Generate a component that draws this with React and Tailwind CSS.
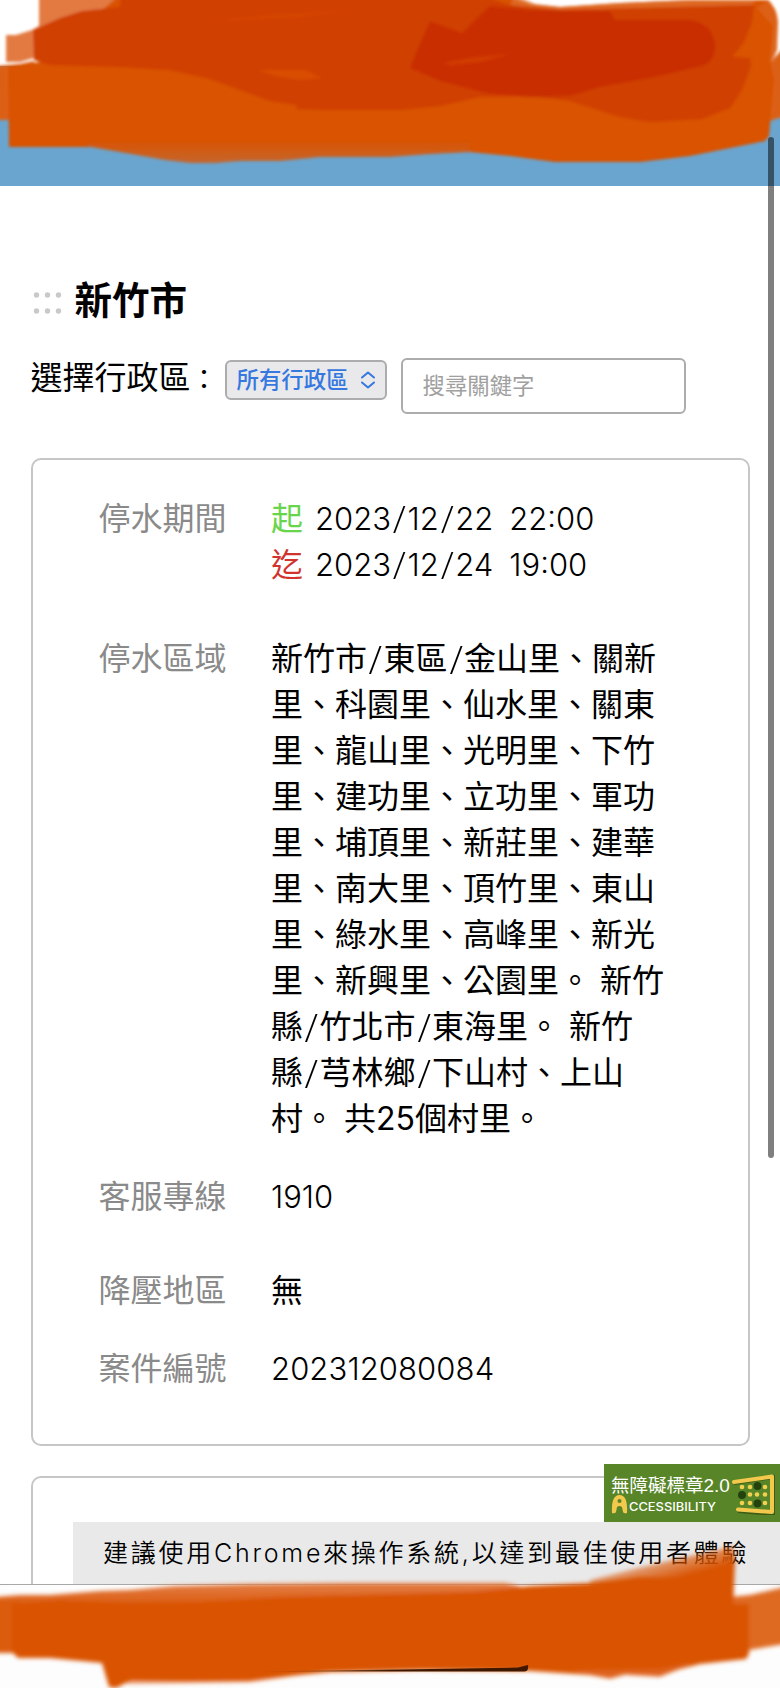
import React from 'react';

const areaLines = [
    '新竹市/東區/金山里、關新',
    '里、科園里、仙水里、關東',
    '里、龍山里、光明里、下竹',
    '里、建功里、立功里、軍功',
    '里、埔頂里、新莊里、建華',
    '里、南大里、頂竹里、東山',
    '里、綠水里、高峰里、新光',
    '里、新興里、公園里。 新竹',
    '縣/竹北市/東海里。 新竹',
    '縣/芎林鄉/下山村、上山',
    '村。 共25個村里。',
];

const Row = ({ label, className = '', children }) => (
    <div className={`flex ${className}`}>
        <div className="w-[172.5px] shrink-0 text-[#8a8a8a]">{label}</div>
        <div className="whitespace-pre">{children}</div>
    </div>
);

// Slashes sit in a wider cell than the font gives them
const Slashed = ({ text }) =>
    text.split('/').map((part, index) => (
        <React.Fragment key={index}>
            {index > 0 && <span className="inline-block w-[16.5px] origin-center scale-x-140 text-center font-extralight">/</span>}
            {part}
        </React.Fragment>
    ));

const Period = ({ mark, color, date, time }) => (
    <div className="flex">
        <span className={`w-[44px] ${color}`}>{mark}</span>
        <span className="mr-[16px] text-[31px] font-[360]"><Slashed text={date} /></span>
        <span className="text-[31px] font-[360]">{time}</span>
    </div>
);

const TopScribble = () => (
    <svg className="absolute left-0 top-0" width="780" height="186" viewBox="0 0 780 186">
        <defs>
            <filter id="soft" x="-5%" y="-10%" width="110%" height="120%">
                <feGaussianBlur stdDeviation="1.5" />
            </filter>
            <linearGradient id="fade" x1="0" y1="140" x2="0" y2="163" gradientUnits="userSpaceOnUse">
                <stop offset="0" stopColor="#d95200" />
                <stop offset="1" stopColor="#c4662e" />
            </linearGradient>
        </defs>
        <path fill="#fff" d="M-5 -5H785V66H-5Z" />
        <g filter="url(#soft)">
            <path fill="#db6014" d="M-5 66L20 64L34 61V120H-5ZM755 0H768Q777 8 778 22L777 50L771 62L785 46V116L770 121L740 100Z" />
            <path fill="#e27a42" d="M39 -5H130V30L34 36V58L20 62H6V35H16L32 30L39 26Z" />
            <path fill="#d95200" d="M8 66L40 62L120 -5H505L530 4L560 7L620 3L690 0H768Q776 8 776 22L770 60L774 80L769 136L765 141L730 148L690 156L640 162L555 162L510 156L470 152L390 152L95 147H9Z" />
            <path fill="url(#fade)" d="M86 142V146L120 152L165 160L190 163H215L240 161H280L320 157L390 157L430 154L470 152V142Z" />
            <path fill="#e07030" opacity=".7" d="M515 -5L535 4L560 7L620 3L690 0H755L752 7L640 9L560 12L510 6Z" />
            <path fill="#e07030" opacity=".5" d="M757 8L768 0Q777 8 778 22L775 62L771 60L773 26Z" />
            <path fill="#d03f00" d="M33 30L60 18L82 11L120 7L121 -5H480L510 5L560 10L640 8L754 5L752 22L744 42L732 57L750 58L751 66L742 90L730 108L702 119L650 122L620 117L570 101L530 96L480 97L440 106L400 110H330L296 109L297 105L270 101L240 90L210 79L170 70L120 67L50 65L34 60Z" />
            <path fill="#d94e00" d="M258 70L305 70L322 78L300 80L275 76Z" />
            <path fill="#c92e00" d="M430 21L462 33L475 20L490 6L530 10L610 11L615 20H690Q714 24 715 46Q715 62 702 66L650 78L600 87L570 96L530 97L490 94L440 81L410 68L418 48Z" />
            <path fill="#d74802" opacity=".6" d="M444 63L470 58L510 54L480 62L450 65ZM210 22L260 15L350 10L300 18Z" />
        </g>
    </svg>
);

const BottomScribble = () => (
    <svg className="absolute bottom-0 left-0" width="780" height="158" viewBox="0 1530 780 158">
        <defs>
            <filter id="soft-bottom" x="-5%" y="-10%" width="110%" height="120%">
                <feGaussianBlur stdDeviation="2" />
            </filter>
            <linearGradient id="tip" x1="690" y1="1549" x2="697" y2="1574" gradientUnits="userSpaceOnUse">
                <stop offset="0" stopColor="#d95200" stopOpacity=".4" />
                <stop offset="1" stopColor="#d95200" />
            </linearGradient>
            <linearGradient id="band" x1="0" y1="1586" x2="0" y2="1606" gradientUnits="userSpaceOnUse">
                <stop offset="0" stopColor="#e27a40" />
                <stop offset="1" stopColor="#db5a0c" />
            </linearGradient>
            <linearGradient id="indicator" x1="255" y1="0" x2="528" y2="0" gradientUnits="userSpaceOnUse">
                <stop offset="0" stopColor="#401800" stopOpacity="0" />
                <stop offset=".5" stopColor="#401800" />
                <stop offset="1" stopColor="#401800" />
            </linearGradient>
        </defs>
        <g filter="url(#soft-bottom)">
            <path fill="url(#band)" d="M-5 1597L20 1595L50 1595L100 1591L130 1590L175 1586L250 1584L350 1583H505L520 1586V1620H-5Z" />
            <path fill="#de6a24" d="M720 1598L750 1595L785 1587V1644L749 1650H720Z" />
            <path fill="#db5c10" d="M-5 1600H20V1653H-5Z" />
            <path fill="url(#tip)" d="M590 1580L630 1570L680 1558L718 1550L733 1546L735 1560L733 1610H590Z" />
            <path fill="#d95200" d="M12 1604L60 1600L130 1603L200 1602L280 1597L400 1594L470 1592L530 1586L590 1583L640 1577L733 1580V1604L749 1604V1654L746 1659L700 1664L680 1669L660 1676L625 1674L610 1678L590 1675L530 1671L420 1670L330 1672L290 1676L250 1681L130 1681L116 1688L109 1687L102 1663L50 1658L18 1658L12 1652Z" />
            <path fill="#e06a28" opacity=".7" d="M122 1682L240 1680L300 1675L250 1682L130 1684ZM570 1670L660 1669L695 1662L660 1677L625 1675L610 1679L590 1675Z" />
        </g>
        <path fill="url(#indicator)" d="M255 1671.500L400 1669.500L518 1667.500L528 1665Q529 1671.500 524 1671.500Z" />
    </svg>
);

const AccessibilityBadge = () => (
    <div className="absolute left-[604px] top-[1464px] h-[58px] w-[176px] bg-[#588527] pl-[7px] pt-[10px] text-white">
        <div className="whitespace-nowrap text-[18.5px] leading-[23px]">
            無障礙標章<span className="font-['Liberation_Sans'] text-[19px]">2.0</span>
        </div>
        <div className="flex items-end">
            <svg width="17" height="19" viewBox="0 0 17 19" className="-mt-0.5">
                <path fill="#f2c94c" d="M1 18Q0 0 8.500 0Q17 0 16 18Q13 19 12 17L11 12Q8.500 10 6 12L5 17Q4 19 1 18Z" />
                <circle cx="8.500" cy="6" r="2" fill="#588527" />
            </svg>
            <svg width="90" height="15" viewBox="0 0 90 15">
                <text x="1" y="11.500" fontFamily="Inter, sans-serif" fontSize="11.500" fontWeight="500" fill="#fff" textLength="87" lengthAdjust="spacingAndGlyphs">CCESSIBILITY</text>
            </svg>
        </div>
        <svg className="absolute left-[126px] top-[9px]" width="48" height="42" viewBox="0 0 48 42">
            <path d="M4 10L43 4V41L8 38" fill="none" stroke="#3d5d16" strokeWidth="4" />
            <path d="M4 9L42 3.500V39L8 36.500" fill="none" stroke="#f2c94c" strokeWidth="4" strokeLinecap="round" strokeLinejoin="round" />
            <g fill="#f2d050">
                <circle cx="12" cy="14" r="2.300" />
                <circle cx="20" cy="14" r="2.300" />
                <circle cx="35" cy="14" r="2.300" />
                <circle cx="20" cy="21.500" r="2.300" />
                <circle cx="27" cy="21.500" r="2.300" />
                <circle cx="35" cy="21.500" r="2.300" />
                <circle cx="12" cy="30" r="2.300" />
                <circle cx="20" cy="30" r="2.300" />
                <circle cx="35" cy="30" r="2.300" />
            </g>
            <g fill="#23420e">
                <circle cx="27.500" cy="13" r="4" />
                <circle cx="12" cy="22" r="4" />
                <circle cx="27.500" cy="30.500" r="4" />
            </g>
        </svg>
    </div>
);

const App = () => (
    <div className="relative h-[1688px] w-[780px] overflow-hidden bg-white font-[Inter,'Noto_Sans_CJK_TC',sans-serif] text-black">
        <header className="h-[186px] bg-[#6aa5cf]" />

        <main className="px-[30.5px] text-[32px] leading-[46px]">
            <div className="flex items-center pt-[90px]">
                <svg width="44" height="24" viewBox="0 0 44 24" className="mt-1" fill="#c9c9c9">
                    <circle cx="5.500" cy="4" r="2.700" />
                    <circle cx="16.500" cy="4" r="2.700" />
                    <circle cx="27.500" cy="4" r="2.700" />
                    <circle cx="5.500" cy="20" r="2.700" />
                    <circle cx="16.500" cy="20" r="2.700" />
                    <circle cx="27.500" cy="20" r="2.700" />
                </svg>
                <h1 className="text-[37.500px] font-bold leading-[50px]">新竹市</h1>
            </div>

            <div className="mt-[32px] flex items-start">
                <div className="mt-[-3px] w-[194px] shrink-0 whitespace-nowrap">
                    選擇行政區<span className="text-[27px]">：</span>
                </div>
                <button className="mt-[2px] flex h-[40px] w-[162px] items-center justify-between rounded-[6px] border-2 border-[#acacae] bg-[#e9e9eb] pl-[10px] pr-[9px] text-[22.400px] font-medium leading-none text-[#3578e0]">
                    所有行政區
                    <svg width="16" height="18" viewBox="0 0 16 18" fill="none" stroke="#3578e0" strokeWidth="2" strokeLinecap="round" strokeLinejoin="round">
                        <path d="M2 6.500L8 1.500L14 6.500M2 11.500L8 16.500L14 11.500" />
                    </svg>
                </button>
                <input
                    className="ml-[14px] h-[56px] w-[285px] rounded-[6px] border-2 border-[#acacac] pl-[20px] pb-[2px] text-[22.400px] leading-none placeholder:text-[#a0a0a0]"
                    placeholder="搜尋關鍵字"
                />
            </div>

            <section className="mt-[44px] h-[988px] w-[719px] rounded-[10px] border-2 border-[#c6c6c6] pl-[66px] pt-[36px]">
                <Row label="停水期間">
                    <Period mark="起" color="text-[#68d54c]" date="2023/12/22" time="22:00" />
                    <Period mark="迄" color="text-[#d0342c]" date="2023/12/24" time="19:00" />
                </Row>
                <Row label="停水區域" className="mt-[48px]">
                    {areaLines.map((line) => (
                        <div key={line}><Slashed text={line} /></div>
                    ))}
                </Row>
                <Row label="客服專線" className="mt-[32px]">
                    <span className="text-[31px] font-[360]">1910</span>
                </Row>
                <Row label="降壓地區" className="mt-[48px]">無</Row>
                <Row label="案件編號" className="mt-[32px]">
                    <span className="text-[31px] font-[360] tracking-[0.1px]">202312080084</span>
                </Row>
            </section>

            <section className="mt-[30px] h-[200px] w-[719px] rounded-[10px] border-2 border-[#c6c6c6]" />
        </main>

        <div className="absolute left-[73px] top-[1522px] flex h-[62px] w-[707px] items-center whitespace-nowrap bg-[#e9e9e9] pl-[30px] pt-[2px] text-[25px] font-[360] tracking-[2.750px]">
            建議使用Chrome來操作系統,以達到最佳使用者體驗
        </div>
        <AccessibilityBadge />
        <footer className="absolute bottom-0 left-0 h-[104px] w-full border-t border-[#a8a8a8] bg-[#fdfdfd]" />
        <TopScribble />
        <BottomScribble />
        <div className="absolute left-[768px] top-[137px] h-[1021px] w-[6px] rounded-full bg-black/50" />
    </div>
);

export default App;
